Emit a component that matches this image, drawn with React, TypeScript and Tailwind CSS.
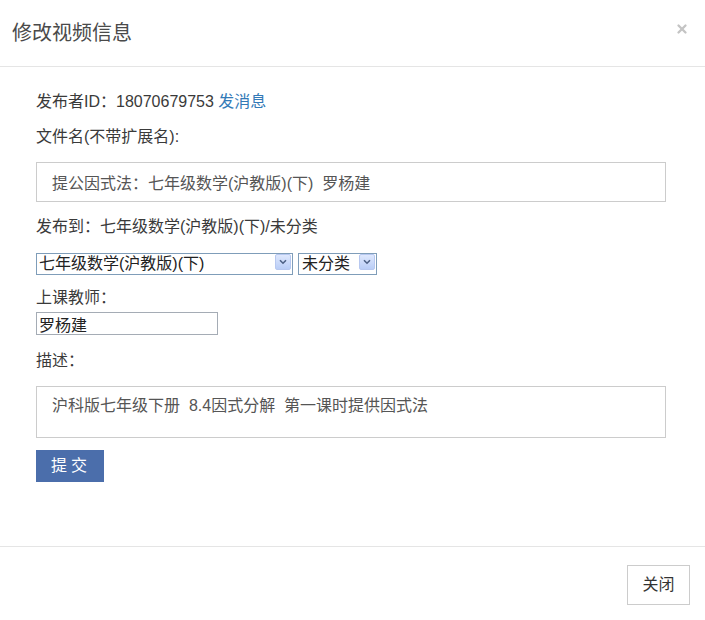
import { X } from 'lucide-react'

const font = { fontFamily: '"Liberation Sans", "Noto Sans CJK SC", sans-serif' }

function Arrow() {
  return (
    <span className="pointer-events-none absolute right-[2px] top-[2px] flex h-[16px] w-[16px] items-center justify-center rounded-[2px] border border-[#b7c8f0] bg-gradient-to-b from-[#dfe8fd] to-[#b9cdf6]">
      <svg width="8" height="6" viewBox="0 0 8 6">
        <path d="M1 1.2 L4 4.2 L7 1.2" fill="none" stroke="#4d6185" strokeWidth="1.6" />
      </svg>
    </span>
  )
}

// 窄冒号，和原页面的字形宽度一致
function Colon() {
  return <span className="inline-block w-[6px]">：</span>
}

export default function App() {
  return (
    <div className="h-[620px] w-[705px] bg-white text-[#3a3a3a]" style={font}>
      {/* 标题 */}
      <div className="flex h-[67px] items-center justify-between border-b border-[#e5e5e5] pl-3 pr-4">
        <h4 className="text-[20px] leading-[24px] text-[#4a4a4a]">修改视频信息</h4>
        <X size={14} strokeWidth={4} className="mb-[9px] text-[#c4c4c4]" />
      </div>

      {/* 表单 */}
      <div className="pb-[64px] pl-[36px] pt-[25px]">
        <div className="text-[16px] leading-[20px]">
          发布者ID：18070679753 <a className="text-[#337ab7]">发消息</a>
        </div>
        <div className="mt-[15px] text-[16px] leading-[20px]">文件名(不带扩展名):</div>
        <input
          className="mt-[15px] block h-[40px] w-[630px] border border-[#ccc] px-[15px] text-[16px] text-[#555] outline-none"
          defaultValue="提公因式法：七年级数学(沪教版)(下)  罗杨建"
          style={font}
        />
        <div className="mt-[15px] text-[16px] leading-[20px]">发布到：七年级数学(沪教版)(下)/未分类</div>
        <div className="mt-[15px] flex h-[22px] gap-[5px]">
          <div className="relative w-[257px]">
            <select
              className="h-full w-full appearance-none border border-[#7f9db9] bg-white pl-[2px] text-[16px] leading-[20px] text-[#222] outline-none"
              style={font}
            >
              <option>七年级数学(沪教版)(下)</option>
            </select>
            <Arrow />
          </div>
          <div className="relative w-[79px]">
            <select
              className="h-full w-full appearance-none border border-[#7f9db9] bg-white pl-[3px] text-[16px] leading-[20px] text-[#222] outline-none"
              style={font}
            >
              <option>未分类</option>
            </select>
            <Arrow />
          </div>
        </div>
        <div className="mt-[14px] text-[16px] leading-[20px]">
          上课教师
          <Colon />
        </div>
        <input
          className="mt-[4px] block h-[23px] w-[182px] border border-[#a5acb5] px-[2px] text-[16px] leading-[20px] text-[#222] outline-none"
          defaultValue="罗杨建"
          style={font}
        />
        <div className="mt-[16px] text-[16px] leading-[20px]">
          描述
          <Colon />
        </div>
        <textarea
          className="mt-[15px] block h-[52px] w-[630px] resize-none border border-[#ccc] px-[15px] py-[8px] text-[16px] leading-[22px] text-[#555] outline-none"
          defaultValue="沪科版七年级下册  8.4因式分解  第一课时提供因式法"
          style={font}
        />
        <button
          className="mt-[12px] block h-[32px] w-[68px] bg-[#4b6eab] pl-[2px] text-[16px] tracking-[4px] text-white"
          style={font}
        >
          提交
        </button>
      </div>

      {/* 底部 */}
      <div className="flex justify-end border-t border-[#e5e5e5] pr-[15px] pt-[18px]">
        <button
          className="h-[40px] w-[63px] border border-[#ccc] bg-white text-[16px] text-[#333]"
          style={font}
        >
          关闭
        </button>
      </div>
    </div>
  )
}
